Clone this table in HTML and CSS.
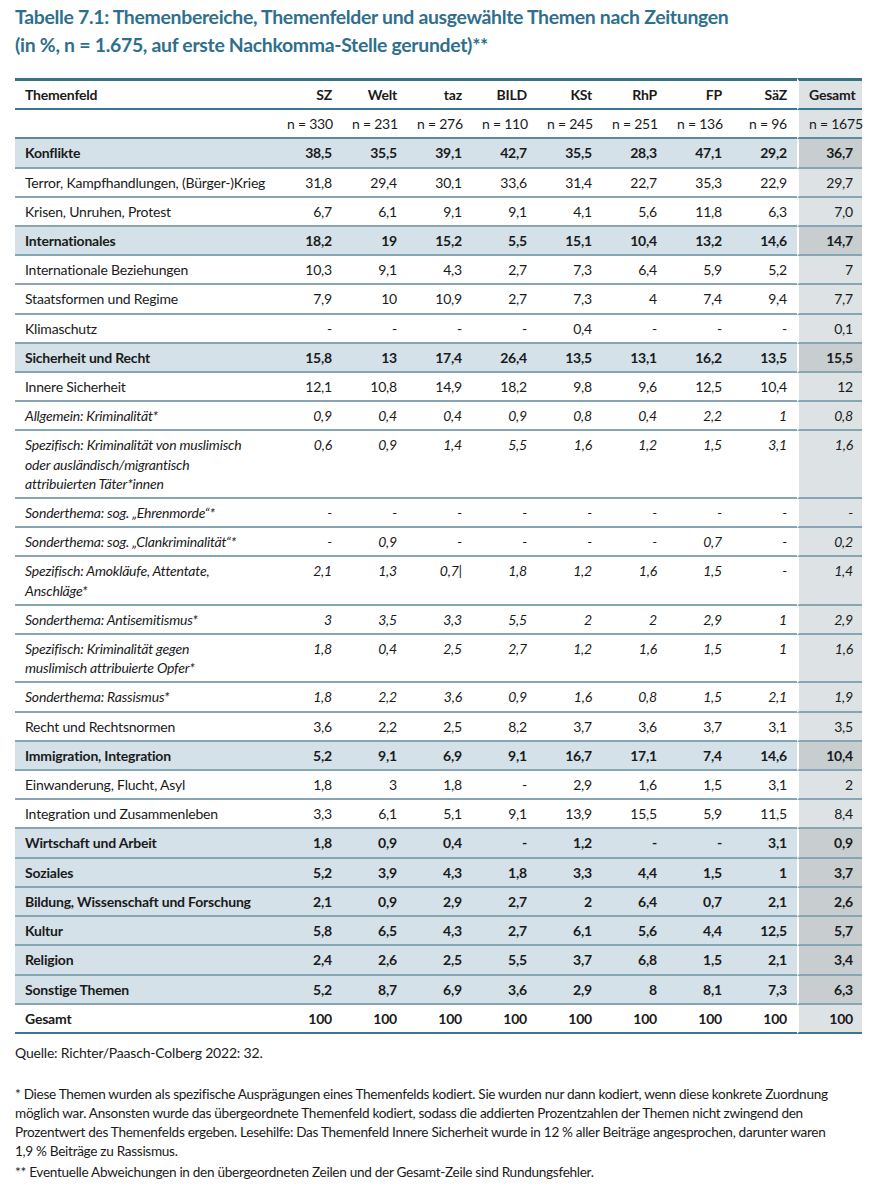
FILE: index.html
```html
<!DOCTYPE html>
<html lang="de">
<head>
<meta charset="utf-8">
<title>Tabelle 7.1</title>
<link rel="stylesheet" href="styles.css">
</head>
<body>
<div class="page">
  <h1 class="title">Tabelle 7.1: Themenbereiche, Themenfelder und ausgewählte Themen nach Zeitungen<br>(in&#8239;%, n&#8239;=&#8239;1.675, auf erste Nachkomma-Stelle gerundet)**</h1>
  <table class="data">
    <colgroup>
      <col class="c-label"><col class="c-num"><col class="c-num"><col class="c-num"><col class="c-num"><col class="c-num"><col class="c-num"><col class="c-num"><col class="c-num"><col class="c-tot">
    </colgroup>
    <thead>
      <tr class="head">
        <th class="lbl">Themenfeld</th><th>SZ</th><th>Welt</th><th>taz</th><th>BILD</th><th>KSt</th><th>RhP</th><th>FP</th><th>SäZ</th><th class="tot">Gesamt</th>
      </tr>
    </thead>
    <tbody>
      <tr class="nrow"><td class="lbl"></td><td>n&#8239;=&#8239;330</td><td>n&#8239;=&#8239;231</td><td>n&#8239;=&#8239;276</td><td>n&#8239;=&#8239;110</td><td>n&#8239;=&#8239;245</td><td>n&#8239;=&#8239;251</td><td>n&#8239;=&#8239;136</td><td>n&#8239;=&#8239;96</td><td class="tot">n&#8239;=&#8239;1675</td></tr>
      <tr class="grp"><td class="lbl">Konflikte</td><td>38,5</td><td>35,5</td><td>39,1</td><td>42,7</td><td>35,5</td><td>28,3</td><td>47,1</td><td>29,2</td><td class="tot">36,7</td></tr>
      <tr><td class="lbl">Terror, Kampfhandlungen, (Bürger-)Krieg</td><td>31,8</td><td>29,4</td><td>30,1</td><td>33,6</td><td>31,4</td><td>22,7</td><td>35,3</td><td>22,9</td><td class="tot">29,7</td></tr>
      <tr><td class="lbl">Krisen, Unruhen, Protest</td><td>6,7</td><td>6,1</td><td>9,1</td><td>9,1</td><td>4,1</td><td>5,6</td><td>11,8</td><td>6,3</td><td class="tot">7,0</td></tr>
      <tr class="grp"><td class="lbl">Internationales</td><td>18,2</td><td>19</td><td>15,2</td><td>5,5</td><td>15,1</td><td>10,4</td><td>13,2</td><td>14,6</td><td class="tot">14,7</td></tr>
      <tr><td class="lbl">Internationale Beziehungen</td><td>10,3</td><td>9,1</td><td>4,3</td><td>2,7</td><td>7,3</td><td>6,4</td><td>5,9</td><td>5,2</td><td class="tot">7</td></tr>
      <tr><td class="lbl">Staatsformen und Regime</td><td>7,9</td><td>10</td><td>10,9</td><td>2,7</td><td>7,3</td><td>4</td><td>7,4</td><td>9,4</td><td class="tot">7,7</td></tr>
      <tr><td class="lbl">Klimaschutz</td><td>-</td><td>-</td><td>-</td><td>-</td><td>0,4</td><td>-</td><td>-</td><td>-</td><td class="tot">0,1</td></tr>
      <tr class="grp"><td class="lbl">Sicherheit und Recht</td><td>15,8</td><td>13</td><td>17,4</td><td>26,4</td><td>13,5</td><td>13,1</td><td>16,2</td><td>13,5</td><td class="tot">15,5</td></tr>
      <tr><td class="lbl">Innere Sicherheit</td><td>12,1</td><td>10,8</td><td>14,9</td><td>18,2</td><td>9,8</td><td>9,6</td><td>12,5</td><td>10,4</td><td class="tot">12</td></tr>
      <tr class="it"><td class="lbl">Allgemein: Kriminalität*</td><td>0,9</td><td>0,4</td><td>0,4</td><td>0,9</td><td>0,8</td><td>0,4</td><td>2,2</td><td>1</td><td class="tot">0,8</td></tr>
      <tr class="it"><td class="lbl">Spezifisch: Kriminalität von muslimisch<br>oder ausländisch/migrantisch<br>attribuierten Täter*innen</td><td>0,6</td><td>0,9</td><td>1,4</td><td>5,5</td><td>1,6</td><td>1,2</td><td>1,5</td><td>3,1</td><td class="tot">1,6</td></tr>
      <tr class="it"><td class="lbl">Sonderthema: sog. „Ehrenmorde“*</td><td>-</td><td>-</td><td>-</td><td>-</td><td>-</td><td>-</td><td>-</td><td>-</td><td class="tot">-</td></tr>
      <tr class="it"><td class="lbl">Sonderthema: sog. „Clankriminalität“*</td><td>-</td><td>0,9</td><td>-</td><td>-</td><td>-</td><td>-</td><td>0,7</td><td>-</td><td class="tot">0,2</td></tr>
      <tr class="it"><td class="lbl">Spezifisch: Amokläufe, Attentate,<br>Anschläge*</td><td>2,1</td><td>1,3</td><td>0,7|</td><td>1,8</td><td>1,2</td><td>1,6</td><td>1,5</td><td>-</td><td class="tot">1,4</td></tr>
      <tr class="it"><td class="lbl">Sonderthema: Antisemitismus*</td><td>3</td><td>3,5</td><td>3,3</td><td>5,5</td><td>2</td><td>2</td><td>2,9</td><td>1</td><td class="tot">2,9</td></tr>
      <tr class="it"><td class="lbl">Spezifisch: Kriminalität gegen<br>muslimisch attribuierte Opfer*</td><td>1,8</td><td>0,4</td><td>2,5</td><td>2,7</td><td>1,2</td><td>1,6</td><td>1,5</td><td>1</td><td class="tot">1,6</td></tr>
      <tr class="it"><td class="lbl">Sonderthema: Rassismus*</td><td>1,8</td><td>2,2</td><td>3,6</td><td>0,9</td><td>1,6</td><td>0,8</td><td>1,5</td><td>2,1</td><td class="tot">1,9</td></tr>
      <tr><td class="lbl">Recht und Rechtsnormen</td><td>3,6</td><td>2,2</td><td>2,5</td><td>8,2</td><td>3,7</td><td>3,6</td><td>3,7</td><td>3,1</td><td class="tot">3,5</td></tr>
      <tr class="grp"><td class="lbl">Immigration, Integration</td><td>5,2</td><td>9,1</td><td>6,9</td><td>9,1</td><td>16,7</td><td>17,1</td><td>7,4</td><td>14,6</td><td class="tot">10,4</td></tr>
      <tr><td class="lbl">Einwanderung, Flucht, Asyl</td><td>1,8</td><td>3</td><td>1,8</td><td>-</td><td>2,9</td><td>1,6</td><td>1,5</td><td>3,1</td><td class="tot">2</td></tr>
      <tr><td class="lbl">Integration und Zusammenleben</td><td>3,3</td><td>6,1</td><td>5,1</td><td>9,1</td><td>13,9</td><td>15,5</td><td>5,9</td><td>11,5</td><td class="tot">8,4</td></tr>
      <tr class="grp"><td class="lbl">Wirtschaft und Arbeit</td><td>1,8</td><td>0,9</td><td>0,4</td><td>-</td><td>1,2</td><td>-</td><td>-</td><td>3,1</td><td class="tot">0,9</td></tr>
      <tr class="grp"><td class="lbl">Soziales</td><td>5,2</td><td>3,9</td><td>4,3</td><td>1,8</td><td>3,3</td><td>4,4</td><td>1,5</td><td>1</td><td class="tot">3,7</td></tr>
      <tr class="grp"><td class="lbl">Bildung, Wissenschaft und Forschung</td><td>2,1</td><td>0,9</td><td>2,9</td><td>2,7</td><td>2</td><td>6,4</td><td>0,7</td><td>2,1</td><td class="tot">2,6</td></tr>
      <tr class="grp"><td class="lbl">Kultur</td><td>5,8</td><td>6,5</td><td>4,3</td><td>2,7</td><td>6,1</td><td>5,6</td><td>4,4</td><td>12,5</td><td class="tot">5,7</td></tr>
      <tr class="grp"><td class="lbl">Religion</td><td>2,4</td><td>2,6</td><td>2,5</td><td>5,5</td><td>3,7</td><td>6,8</td><td>1,5</td><td>2,1</td><td class="tot">3,4</td></tr>
      <tr class="grp"><td class="lbl">Sonstige Themen</td><td>5,2</td><td>8,7</td><td>6,9</td><td>3,6</td><td>2,9</td><td>8</td><td>8,1</td><td>7,3</td><td class="tot">6,3</td></tr>
      <tr class="total"><td class="lbl">Gesamt</td><td>100</td><td>100</td><td>100</td><td>100</td><td>100</td><td>100</td><td>100</td><td>100</td><td class="tot">100</td></tr>
    </tbody>
  </table>
  <p class="source">Quelle: Richter/Paasch-Colberg 2022: 32.</p>
  <div class="notes">
    <p>* Diese Themen wurden als spezifische Ausprägungen eines Themenfelds kodiert. Sie wurden nur dann kodiert, wenn diese konkrete Zuordnung möglich war. Ansonsten wurde das übergeordnete Themenfeld kodiert, sodass die addierten Prozentzahlen der Themen nicht zwingend den Prozentwert des Themenfelds ergeben. Lesehilfe: Das Themenfeld Innere Sicherheit wurde in 12&#8239;% aller Beiträge angesprochen, darunter waren 1,9&#8239;%&nbsp;Beiträge zu Rassismus.</p>
    <p>** Eventuelle Abweichungen in den übergeordneten Zeilen und der Gesamt-Zeile sind Rundungsfehler.</p>
  </div>
</div>
</body>
</html>
```

FILE: styles.css
```css
html, body {
  margin: 0;
  padding: 0;
  background: #ffffff;
}

.page {
  padding: 3px 21px 0 15px;
  font-family: "Lato", "Noto Sans", sans-serif;
  letter-spacing: -0.2px;
  color: #1a1a1a;
}

.title {
  margin: 0 0 19px 0;
  font-size: 19.4px;
  line-height: 28px;
  font-weight: 700;
  letter-spacing: -0.3px;
  color: #2f6f8c;
}

.data {
  width: 847px;
  table-layout: fixed;
  border-collapse: separate;
  border-spacing: 0;
  font-size: 14px;
}

.c-label { width: 262px; }
.c-num { width: 65px; }
.c-tot { width: 65px; }

.data th,
.data td {
  padding: 4px 10px;
  line-height: 19.2px;
  text-align: right;
  vertical-align: top;
  white-space: nowrap;
  border-bottom: 2px solid #87a6b4;
}

.data th.lbl,
.data td.lbl {
  text-align: left;
}

.data .tot {
  background: #dde2e5;
  border-left: 2px solid #ffffff;
  padding-right: 9px;
}

.head th {
  font-weight: 700;
  border-top: 3px solid #3b7089;
  border-bottom: 2px solid #3d7690;
}

.nrow td {
  border-bottom-color: #5d8ca2;
}

.grp td {
  background: #d4e1e9;
  font-weight: 700;
}

.grp td.tot {
  background: #c8cdd0;
}

.it td {
  font-style: italic;
}

.total td {
  font-weight: 700;
  border-bottom-color: #3d7690;
}

.source {
  margin: 9px 0 0 0;
  font-size: 14px;
  line-height: 19px;
}

.notes {
  margin-top: 23px;
  font-size: 13.6px;
  letter-spacing: -0.3px;
  line-height: 19px;
}

.notes p {
  margin: 0 0 2px 0;
}
```
